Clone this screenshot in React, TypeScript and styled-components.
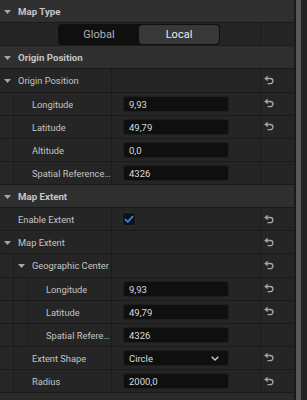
import React from 'react';
import styled, { createGlobalStyle } from 'styled-components';

const GlobalStyle = createGlobalStyle`
  html, body { margin: 0; padding: 0; background: #2a2a2a; }
  body { font-family: Roboto, "Noto Sans", "Liberation Sans", sans-serif; }
  #root { width: 307px; height: 400px; overflow: hidden; }
  * { box-sizing: border-box; }
`;

const ROW_H = '23.125px';

const Page = styled.div`
  display: flex;
  width: 307px;
  height: 400px;
  background: #2a2a2a;
`;

const Panel = styled.div`
  width: 294px;
  display: flex;
  flex-direction: column;
`;

const Gutter = styled.div`
  width: 13px;
  display: flex;
  background: #232323;
  border-left: 2px solid #1a1a1a;
`;

const Thumb = styled.div`
  width: 5px;
  background: #585858;
`;

const HeaderRow = styled.div`
  flex: 0 0 ${ROW_H};
  height: ${ROW_H};
  border-bottom: 1px solid #1a1a1a;
  background: #2f2f2f;
  display: flex;
  align-items: center;
  padding: 1px 0 0 4px;
  font-weight: 700;
  font-size: 9.7px;
  color: #c6c6c6;
`;

const Row = styled.div<{ $cols?: string }>`
  flex: 0 0 ${ROW_H};
  height: ${ROW_H};
  display: grid;
  grid-template-columns: ${(p) => p.$cols || '112px 149px 33px'};
  border-bottom: 1px solid #1a1a1a;
  background: #252525;
`;

const NameCell = styled.div`
  display: flex;
  align-items: stretch;
  border-right: 1px solid #1b1b1b;
  overflow: hidden;
`;

const Indent = styled.div`
  flex: 0 0 14px;
  border-right: 1px solid #1c1c1c;
  background: #262626;
`;

const Label = styled.div<{ $arrow?: boolean }>`
  flex: 1;
  min-width: 0;
  display: flex;
  align-items: center;
  padding: 1px 0 0 ${(p) => (p.$arrow ? 4 : 18)}px;
  font-size: 9.3px;
  color: #c4c4c4;
  white-space: nowrap;
  overflow: hidden;
`;

const LabelText = styled.span`
  overflow: hidden;
  text-overflow: ellipsis;
`;

const ValueCell = styled.div`
  display: flex;
  align-items: center;
  padding-left: 11px;
  border-right: 1px solid #1b1b1b;
`;

const ResetCell = styled.div`
  display: flex;
  align-items: center;
  padding-left: 3px;
`;

const Field = styled.div`
  width: 106px;
  height: 16px;
  border-radius: 3px;
  background: #0f0f0f;
  border: 1px solid #1e1e1e;
  display: flex;
  align-items: center;
  justify-content: space-between;
  padding: 1px 9px 0 5px;
  font-size: 9.5px;
  color: #dcdcdc;
`;

const Check = styled.div`
  width: 14px;
  height: 14px;
  margin-left: -1px;
  border-radius: 3px;
  background: #121212;
  border: 1px solid #2c2c2c;
  display: flex;
  align-items: center;
  justify-content: center;
`;

const SegRow = styled.div`
  display: flex;
  align-items: center;
  padding-left: 58px;
  border-right: 1px solid #1b1b1b;
`;

const Segmented = styled.div`
  width: 162px;
  height: 21px;
  border-radius: 4px;
  background: #0f0f0f;
  display: flex;
  padding: 1px;
`;

const SegButton = styled.div<{ $active?: boolean }>`
  flex: 1;
  display: flex;
  align-items: center;
  justify-content: center;
  border-radius: 4px;
  font-size: 11px;
  color: ${(p) => (p.$active ? '#ececec' : '#b4b4b4')};
  background: ${(p) => (p.$active ? '#383838' : 'transparent')};
`;

const ArrowIcon = styled.svg`
  flex: 0 0 auto;
  margin-right: 7px;
`;

const Arrow = () => (
  <ArrowIcon width="7" height="4" viewBox="0 0 7 4">
    <path d="M0 0 H7 L3.5 4 Z" fill="#a6a6a6" />
  </ArrowIcon>
);

const ResetIcon = () => (
  <svg width="10" height="9" viewBox="0 0 10 9">
    <path
      d="M2 2.5 H6.3 A2.6 2.6 0 0 1 6.3 7.7 H3.5"
      fill="none"
      stroke="#a4a4a4"
      strokeWidth="1.3"
    />
    <path d="M3.8 0.4 L1.2 2.5 L3.8 4.6" fill="none" stroke="#a4a4a4" strokeWidth="1.3" />
  </svg>
);

const Chevron = () => (
  <svg width="8" height="5" viewBox="0 0 8 5">
    <path d="M0.7 0.7 L4 4 L7.3 0.7" fill="none" stroke="#d0d0d0" strokeWidth="1.3" />
  </svg>
);

const CheckMark = () => (
  <svg width="10" height="8" viewBox="0 0 10 8">
    <path d="M1 4.2 L3.8 6.8 L9 1.2" fill="none" stroke="#2a8cf0" strokeWidth="1.8" />
  </svg>
);

type Value =
  | { type: 'input'; text: string }
  | { type: 'select'; text: string }
  | { type: 'check' };

type Item =
  | { kind: 'header'; label: string }
  | { kind: 'segment' }
  | { kind: 'prop'; label: string; depth: number; arrow?: boolean; value?: Value; reset?: boolean };

const items: Item[] = [
  { kind: 'header', label: 'Map Type' },
  { kind: 'segment' },
  { kind: 'header', label: 'Origin Position' },
  { kind: 'prop', label: 'Origin Position', depth: 0, arrow: true, reset: true },
  { kind: 'prop', label: 'Longitude', depth: 1, value: { type: 'input', text: '9,93' }, reset: true },
  { kind: 'prop', label: 'Latitude', depth: 1, value: { type: 'input', text: '49,79' }, reset: true },
  { kind: 'prop', label: 'Altitude', depth: 1, value: { type: 'input', text: '0,0' } },
  { kind: 'prop', label: 'Spatial Reference System', depth: 1, value: { type: 'input', text: '4326' } },
  { kind: 'header', label: 'Map Extent' },
  { kind: 'prop', label: 'Enable Extent', depth: 0, value: { type: 'check' }, reset: true },
  { kind: 'prop', label: 'Map Extent', depth: 0, arrow: true, reset: true },
  { kind: 'prop', label: 'Geographic Center', depth: 1, arrow: true, reset: true },
  { kind: 'prop', label: 'Longitude', depth: 2, value: { type: 'input', text: '9,93' }, reset: true },
  { kind: 'prop', label: 'Latitude', depth: 2, value: { type: 'input', text: '49,79' }, reset: true },
  { kind: 'prop', label: 'Spatial Reference System', depth: 2, value: { type: 'input', text: '4326' } },
  { kind: 'prop', label: 'Extent Shape', depth: 1, value: { type: 'select', text: 'Circle' }, reset: true },
  { kind: 'prop', label: 'Radius', depth: 1, value: { type: 'input', text: '2000,0' }, reset: true },
];

const renderValue = (v?: Value) => {
  if (!v) return null;
  if (v.type === 'check')
    return (
      <Check>
        <CheckMark />
      </Check>
    );
  if (v.type === 'select')
    return (
      <Field>
        <span>{v.text}</span>
        <Chevron />
      </Field>
    );
  return <Field>{v.text}</Field>;
};

export default function App() {
  return (
    <Page>
      <GlobalStyle />
      <Panel>
        {items.map((it, i) => {
          if (it.kind === 'header')
            return (
              <HeaderRow key={i}>
                <Arrow />
                {it.label}
              </HeaderRow>
            );
          if (it.kind === 'segment')
            return (
              <Row key={i} $cols="261px 33px">
                <SegRow>
                  <Segmented>
                    <SegButton>Global</SegButton>
                    <SegButton $active>Local</SegButton>
                  </Segmented>
                </SegRow>
                <ResetCell />
              </Row>
            );
          return (
            <Row key={i}>
              <NameCell>
                {Array.from({ length: it.depth }).map((_, d) => (
                  <Indent key={d} />
                ))}
                <Label $arrow={it.arrow}>
                  {it.arrow && <Arrow />}
                  <LabelText>{it.label}</LabelText>
                </Label>
              </NameCell>
              <ValueCell>{renderValue(it.value)}</ValueCell>
              <ResetCell>{it.reset && <ResetIcon />}</ResetCell>
            </Row>
          );
        })}
      </Panel>
      <Gutter>
        <Thumb />
      </Gutter>
    </Page>
  );
}
